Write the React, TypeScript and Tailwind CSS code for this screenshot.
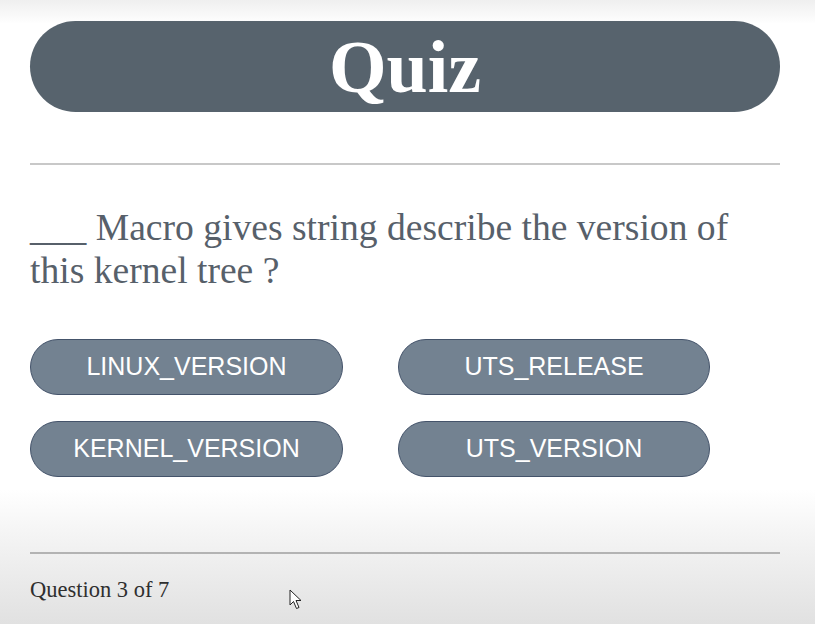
import React from 'react';

const answers = ['LINUX_VERSION', 'UTS_RELEASE', 'KERNEL_VERSION', 'UTS_VERSION'];

const App: React.FC = () => {
  return (
    <div className="relative w-[815px] h-[624px] overflow-hidden px-[30px] pt-[21px] bg-[linear-gradient(to_bottom,#efefef_0px,#ffffff_24px,#ffffff_490px,#f4f4f4_535px,#e1e1e1_624px)]">
      {/* title bar */}
      <div className="flex items-center justify-center h-[91px] w-[750px] rounded-full bg-[#57636d]">
        <h1 className="text-[74px] leading-none font-bold text-white font-['Liberation_Serif',serif]">Quiz</h1>
      </div>

      <hr className="mt-[51px] w-[750px] border-0 h-[2px] bg-[#c8c8c8]" />

      {/* question */}
      <p className="mt-[41px] w-[750px] text-[37.6px] leading-[43px] text-[#57606a] font-['Liberation_Serif',serif]">
        ___ Macro gives string describe the version of this kernel tree ?
      </p>

      {/* answers */}
      <div className="mt-[47px] grid grid-cols-[313px_312px] gap-x-[55px] gap-y-[26px]">
        {answers.map((a) => (
          <button
            key={a}
            className="h-[56px] rounded-full border border-[#44536a] bg-[#738291] text-white text-[25px] font-['Liberation_Sans',Arial,sans-serif]"
          >
            {a}
          </button>
        ))}
      </div>

      <hr className="mt-[75px] w-[750px] border-0 h-[2px] bg-[#b3b3b3]" />

      <p className="mt-[23px] text-[22.5px] leading-[26px] text-[#2f2f2f] font-['Liberation_Serif',serif]">Question 3 of 7</p>

      {/* mouse pointer */}
      <svg className="absolute left-[289px] top-[589px]" width="14" height="21" viewBox="0 0 14 21">
        <path d="M1 1 L1 16 L4.5 12.5 L7.5 19.5 L10 18.5 L7 11.5 L12 11.5 Z" fill="#ffffff" stroke="#222" strokeWidth="1" strokeLinejoin="round" />
      </svg>
    </div>
  );
};

export default App;
